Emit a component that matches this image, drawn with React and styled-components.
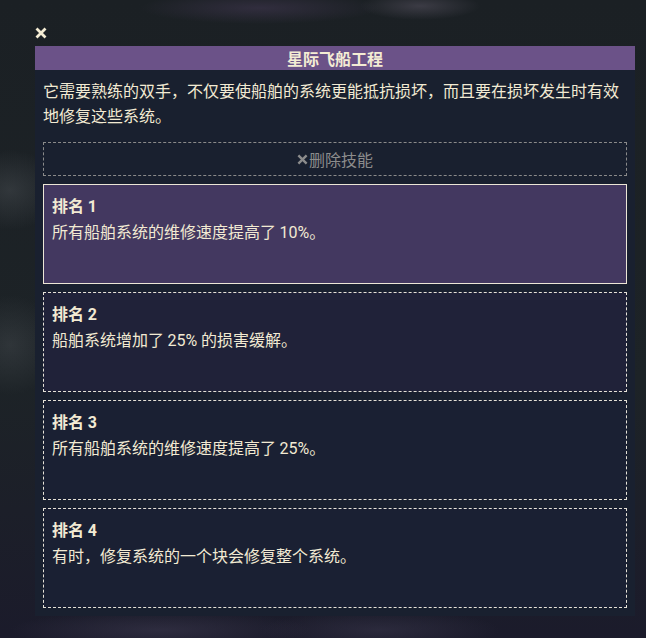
import styled, { createGlobalStyle } from "styled-components";

const GlobalStyle = createGlobalStyle`
  html, body {
    margin: 0;
    padding: 0;
  }
  body {
    min-height: 638px;
    background:
      radial-gradient(ellipse 60px 14px at 420px 6px, rgba(120,110,130,0.35), transparent),
      radial-gradient(ellipse 120px 16px at 260px 8px, rgba(90,70,110,0.35), transparent),
      radial-gradient(ellipse 50px 40px at 10px 190px, rgba(90,95,100,0.35), transparent),
      radial-gradient(ellipse 50px 50px at 10px 345px, rgba(90,95,100,0.3), transparent),
      radial-gradient(ellipse 150px 20px at 160px 630px, rgba(80,75,100,0.35), transparent),
      radial-gradient(ellipse 120px 20px at 380px 630px, rgba(80,75,100,0.3), transparent),
      linear-gradient(180deg, #1b2024 0%, #1d2327 60%, #1b1b2b 100%);
    font-family: "Noto Sans CJK SC", "Noto Sans", sans-serif;
    color: #f2ead3;
  }
`;

const Page = styled.div`
  padding-left: 35px;
  padding-top: 27px;
`;

const CloseButton = styled.button`
  display: block;
  width: 12px;
  height: 12px;
  padding: 0;
  margin: 0 0 7px 0;
  border: none;
  background: none;
  cursor: pointer;
`;

const Panel = styled.div`
  width: 600px;
  background: #19202f;
  padding-bottom: 8px;
`;

const Header = styled.div`
  height: 24px;
  background: #6b5288;
  display: flex;
  align-items: center;
  justify-content: center;
  font-weight: 700;
  font-size: 16px;
  color: #f4ecd4;
`;

const Description = styled.p`
  margin: 0;
  padding: 8px 8px 14px;
  font-size: 16px;
  line-height: 25px;
`;

const List = styled.div`
  display: flex;
  flex-direction: column;
  gap: 8px;
  padding: 0 8px;
`;

const RemoveButton = styled.button`
  height: 34px;
  box-sizing: border-box;
  border: 1px dashed #8a8a8a;
  background: transparent;
  color: #8c8c8c;
  font-family: "Noto Sans CJK SC", sans-serif;
  font-size: 16px;
  display: flex;
  align-items: center;
  justify-content: center;
  gap: 1px;
  cursor: pointer;
`;

const Rank = styled.div`
  height: 100px;
  box-sizing: border-box;
  padding: 8px;
  background: ${(p) => p.bg};
  border: 1px ${(p) => (p.selected ? "solid #ece6d6" : "dashed #e6e2d8")};
`;

const RankTitle = styled.div`
  font-weight: 700;
  font-size: 16px;
  line-height: 24px;
`;

const RankText = styled.div`
  font-size: 16px;
  line-height: 24px;
`;

const Num = styled.span`
  font-family: "Liberation Sans Narrow", "Roboto", sans-serif;
`;

const Cross = ({ size, color, width }) => (
  <svg width={size} height={size} viewBox="0 0 12 12">
    <path d="M1.5 1.5 L10.5 10.5 M10.5 1.5 L1.5 10.5" stroke={color} strokeWidth={width} />
  </svg>
);

const ranks = [
  { n: 1, text: ["所有船舶系统的维修速度提高了 ", "10%", "。"], bg: "#433860", selected: true },
  { n: 2, text: ["船舶系统增加了 ", "25%", " 的损害缓解。"], bg: "#202239" },
  { n: 3, text: ["所有船舶系统的维修速度提高了 ", "25%", "。"], bg: "#1a2033" },
  { n: 4, text: ["有时，修复系统的一个块会修复整个系统。", "", ""], bg: "#1a2033" },
];

export default function App() {
  return (
    <>
      <GlobalStyle />
      <Page>
        <CloseButton aria-label="关闭">
          <Cross size={12} color="#f4ecd4" width={2.8} />
        </CloseButton>
        <Panel>
          <Header>星际飞船工程</Header>
          <Description>
            它需要熟练的双手，不仅要使船舶的系统更能抵抗损坏，而且要在损坏发生时有效地修复这些系统。
          </Description>
          <List>
            <RemoveButton>
              <Cross size={11} color="#8c8c8c" width={2.6} />
              删除技能
            </RemoveButton>
            {ranks.map((r) => (
              <Rank key={r.n} bg={r.bg} selected={r.selected}>
                <RankTitle>
                  排名 <Num>{r.n}</Num>
                </RankTitle>
                <RankText>
                  {r.text[0]}
                  {r.text[1] && <Num>{r.text[1]}</Num>}
                  {r.text[2]}
                </RankText>
              </Rank>
            ))}
          </List>
        </Panel>
      </Page>
    </>
  );
}
